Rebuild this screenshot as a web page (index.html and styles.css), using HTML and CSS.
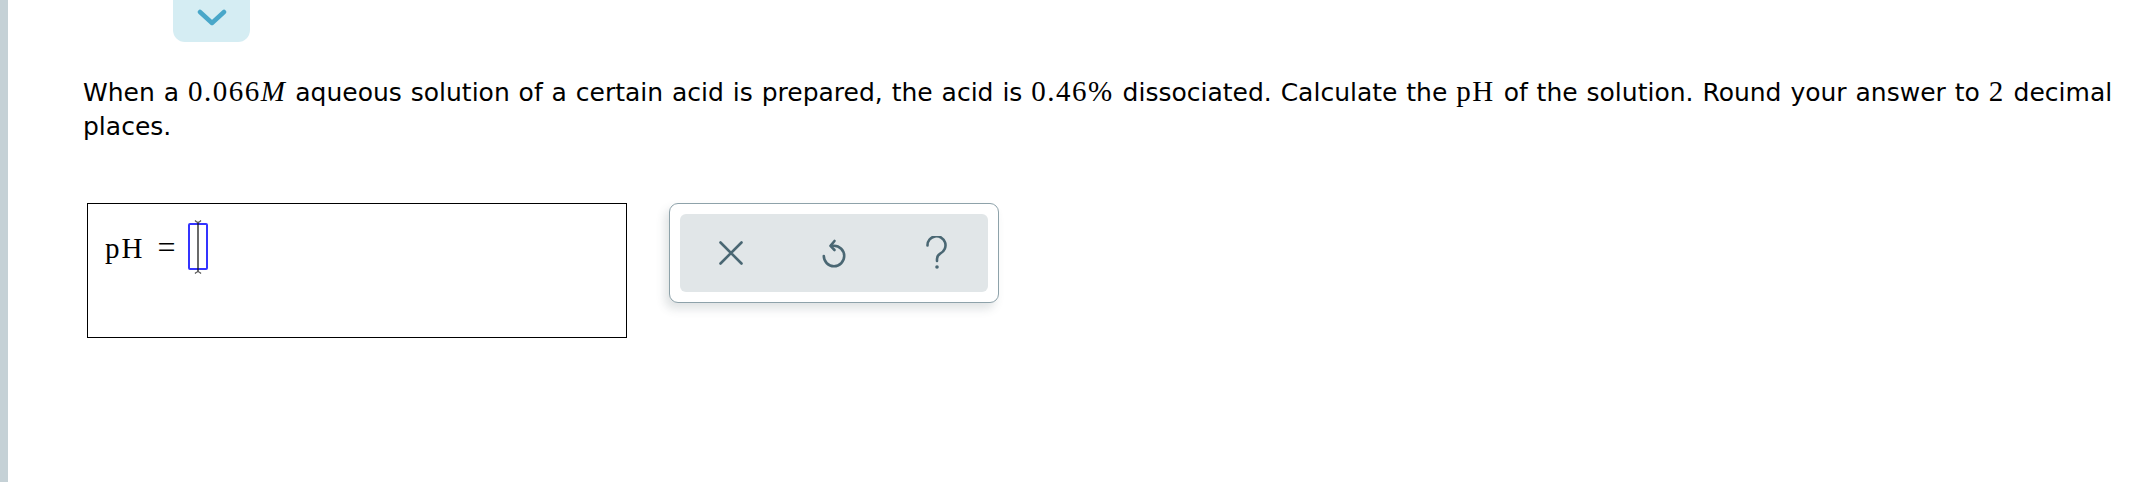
FILE: index.html
```html
<!DOCTYPE html>
<html lang="en">
<head>
<meta charset="utf-8">
<title>Question</title>
<link rel="stylesheet" href="styles.css">
</head>
<body>
<div class="page">
  <div class="rail"></div>
  <main class="content">
    <div class="toggle-wrap">
      <button class="toggle" type="button" aria-label="Collapse">
        <svg width="30" height="18" viewBox="0 0 30 18"><path d="M3 3 L15 14 L27 3" fill="none" stroke="#49a7c9" stroke-width="4.5" stroke-linecap="round" stroke-linejoin="round"/></svg>
      </button>
    </div>
    <p class="question"><span>When a</span> <span class="math">0.066<i>M</i></span> <span>aqueous solution of a certain acid is prepared, the acid is</span> <span class="math">0.46%</span> <span>dissociated. Calculate the</span> <span class="math">pH</span> <span>of the solution. Round your answer to</span> <span class="math">2</span> <span>decimal</span> <span>places.</span></p>
    <div class="answer-row">
      <div class="answer-box">
        <span class="expr"><span class="ph">pH</span><span class="eq">=</span></span><span class="slot"><svg width="14" height="56" viewBox="0 0 14 56"><path d="M7 3 V53" fill="none" stroke="#1a1a1a" stroke-width="1.3"/><path d="M4 1.5 Q7 5 10 1.5 M4 54.5 Q7 51 10 54.5" fill="none" stroke="#555" stroke-width="1.2"/></svg></span>
      </div>
      <div class="tools">
        <div class="tools-inner">
          <button class="tool" type="button" aria-label="Clear">
            <svg width="24" height="24" viewBox="0 0 24 24"><path d="M1.5 1.5 L22.5 22.5 M22.5 1.5 L1.5 22.5" fill="none" stroke="#4a6773" stroke-width="2.6" stroke-linecap="round"/></svg>
          </button>
          <button class="tool" type="button" aria-label="Undo">
            <svg width="26" height="32" viewBox="0 0 26 32"><path d="M2.8 19 A10.2 10.2 0 1 0 13 8.8 L10 8.8" fill="none" stroke="#4a6773" stroke-width="2.6" stroke-linecap="round" stroke-linejoin="round"/><path d="M13.5 4 L9.5 8.8 L13.5 13" fill="none" stroke="#4a6773" stroke-width="2.6" stroke-linecap="round" stroke-linejoin="round"/></svg>
          </button>
          <button class="tool" type="button" aria-label="Help">
            <svg width="24" height="34" viewBox="0 0 24 34"><path d="M2.5 9.5 A9 9 0 1 1 15.5 17.3 C12.8 18.8 12 20.3 12 23 V25" fill="none" stroke="#4a6773" stroke-width="2.6" stroke-linecap="round"/><circle cx="12" cy="31" r="1.8" fill="#4a6773"/></svg>
          </button>
        </div>
      </div>
    </div>
  </main>
</div>
</body>
</html>
```

FILE: styles.css
```css
* { box-sizing: border-box; }
html, body { margin: 0; padding: 0; background: #fff; }
body { font-family: "DejaVu Sans", Verdana, sans-serif; color: #000; }

.page {
  display: flex;
  min-height: 482px;
}
.rail {
  width: 8px;
  flex: none;
  background: #c5d1d6;
}
.content {
  flex: 1;
  padding: 0 10px 0 75px;
}
.toggle-wrap {
  padding-left: 90px;
}
.toggle {
  display: flex;
  align-items: center;
  justify-content: center;
  width: 77px;
  height: 42px;
  border: none;
  padding: 0 0 6px 0;
  background: #d5edf3;
  border-radius: 0 0 12px 12px;
  cursor: pointer;
}
.question {
  margin: 34px 0 0 0;
  font-size: 25px;
  line-height: 34px;
  word-spacing: 0.95px;
}
.math {
  font-family: "Liberation Serif", "Times New Roman", serif;
  font-size: 29px;
  line-height: 30px;
  letter-spacing: 1.5px;
  word-spacing: 0;
}
.math i { font-style: italic; }

.answer-row {
  display: flex;
  align-items: flex-start;
  margin-top: 59px;
  padding-left: 4px;
}
.answer-box {
  width: 540px;
  height: 135px;
  border: 1px solid #000;
  display: flex;
  align-items: flex-start;
  padding: 19px 0 0 17px;
  font-family: "Liberation Serif", "Times New Roman", serif;
  font-size: 29px;
  line-height: 50px;
}
.ph { letter-spacing: 2px; }
.eq {
  font-size: 32px;
  line-height: 1;
  margin: 0 12px 0 13px;
}
.slot {
  position: relative;
  width: 20px;
  height: 47px;
  border: 2px solid #3434ff;
  border-radius: 2px;
}
.slot svg {
  position: absolute;
  left: 1px;
  top: -6px;
}
.tools {
  margin-left: 42px;
  width: 330px;
  height: 100px;
  border: 1px solid #8ea2aa;
  border-radius: 9px;
  background: #fff;
  padding: 10px;
  box-shadow: -4px 6px 10px rgba(60, 80, 90, 0.16);
}
.tools-inner {
  display: flex;
  height: 100%;
  background: #e1e6e8;
  border-radius: 6px;
}
.tool {
  flex: 1;
  display: flex;
  align-items: center;
  justify-content: center;
  background: none;
  border: none;
  padding: 0;
  cursor: pointer;
}
```
